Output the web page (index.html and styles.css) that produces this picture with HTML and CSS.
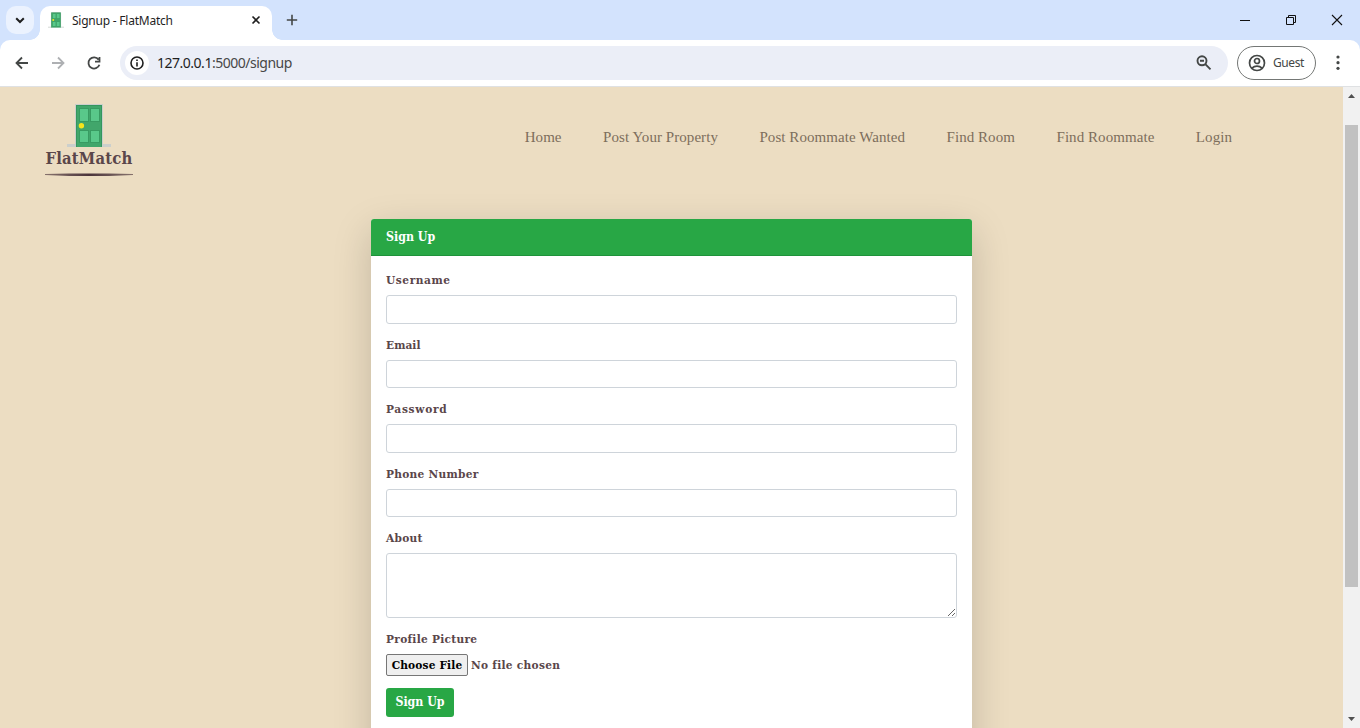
FILE: index.html
```html
<!DOCTYPE html>
<html lang="en">
<head>
<meta charset="utf-8">
<title>Signup - FlatMatch</title>
<link rel="stylesheet" href="styles.css">
</head>
<body>
<svg class="defs" width="0" height="0" aria-hidden="true">
  <symbol id="door" viewBox="0 0 44 43">
    <path d="M8 0h28v40h8v3H0v-3h8z" fill="#cbcfcc"/>
    <path d="M9 1h26v42H9z" fill="#41a66b"/>
    <path d="M9 1h26v1H9zM34 1h1v42h-1zM9 1h1v42H9z" fill="#35965e"/>
    <path d="M12 4h10v14H12zM23 4h10v14H23zM12 26h10v13H12zM23 26h10v13H23z" fill="#389b62"/>
    <path d="M13 5h8v12h-8zM24 5h8v12h-8zM13 27h8v11h-8zM24 27h8v11h-8z" fill="#59c88a"/>
    <circle cx="14.4" cy="21.7" r="2.7" fill="#f6e51d"/>
  </symbol>
</svg>
<div class="window">
  <header class="tabstrip">
    <button class="tab-search"><svg width="28" height="28" viewBox="0 0 28 28"><path d="M10.2 12.2l3.8 3.8 3.8-3.8" fill="none" stroke="#1f1f1f" stroke-width="2"/></svg></button>
    <div class="tab">
      <svg class="favicon" width="16" height="16" viewBox="0 0 44 43"><use href="#door"/></svg>
      <span class="tab-title">Signup - FlatMatch</span>
      <svg class="tab-close" width="10" height="10" viewBox="0 0 10 10"><path d="M1.500 1.500l7 7M8.500 1.500l-7 7" stroke="#1f1f1f" stroke-width="1.6"/></svg>
    </div>
    <svg class="new-tab" width="12" height="12" viewBox="0 0 12 12"><path d="M6 .8v10.4M.8 6h10.4" stroke="#444746" stroke-width="1.6"/></svg>
    <div class="controls">
      <svg width="46" height="40" viewBox="0 0 46 40"><path d="M18 20.5h10" stroke="#111"/></svg>
      <svg width="46" height="40" viewBox="0 0 46 40"><path d="M18.500 17.500h7v7h-7zM20.500 17v-1.500h7v7H26" fill="none" stroke="#111"/></svg>
      <svg width="46" height="40" viewBox="0 0 46 40"><path d="M18 15l10 10M28 15L18 25" stroke="#111" stroke-width="1.1"/></svg>
    </div>
  </header>
  <div class="toolbar">
    <svg class="tool" width="36" height="36" viewBox="0 0 36 36"><path d="M24 18H13M18 12.500L12.500 18l5.500 5.500" fill="none" stroke="#444746" stroke-width="1.8"/></svg>
    <svg class="tool" width="36" height="36" viewBox="0 0 36 36"><path d="M12 18h11M18 12.500l5.500 5.500-5.500 5.500" fill="none" stroke="#aeb0b3" stroke-width="1.8"/></svg>
    <svg class="tool" width="36" height="36" viewBox="0 0 36 36"><path d="M22.600 14.600A5.600 5.600 0 1 0 23.400 19.700M23.500 12v4.600H19" fill="none" stroke="#444746" stroke-width="1.8"/></svg>
    <div class="address">
      <span class="site-info"><svg width="14" height="14" viewBox="0 0 14 14"><circle cx="7" cy="7" r="6" fill="none" stroke="#1f1f1f" stroke-width="1.6"/><path d="M7 6.200v4.200M7 3.500v1.600" stroke="#1f1f1f" stroke-width="1.600"/></svg></span>
      <span class="url">127.0.0.1<span class="url-path">:5000/signup</span></span>
      <svg class="zoom-icon" width="16" height="16" viewBox="0 0 16 16"><circle cx="6" cy="5.800" r="4.500" fill="none" stroke="#444746" stroke-width="1.900"/><path d="M4 5.800h4M9.300 9.100l5.200 5.200" stroke="#444746" stroke-width="1.900"/></svg>
    </div>
    <div class="guest">
      <svg width="18" height="18" viewBox="0 0 18 18" fill="none" stroke="#444746" stroke-width="1.700"><circle cx="9" cy="9" r="7.500"/><circle cx="9" cy="7" r="2.500"/><path d="M3.900 14.100c2.900-2.600 7.300-2.600 10.200 0"/></svg>
      <span>Guest</span>
    </div>
    <svg class="menu" width="4" height="16" viewBox="0 0 4 16" fill="#444746"><circle cx="2" cy="2" r="1.600"/><circle cx="2" cy="7.700" r="1.600"/><circle cx="2" cy="13.300" r="1.600"/></svg>
  </div>
  <div class="viewport">
    <main class="page">
      <nav class="navbar">
        <a class="brand">
          <svg width="44" height="43"><use href="#door"/></svg>
          <span class="brand-name">FlatMatch</span>
          <svg class="brand-line" width="88" height="4" viewBox="0 0 88 4"><defs><linearGradient id="line"><stop offset="0" stop-color="#5b4448" stop-opacity=".7"/><stop offset=".5" stop-color="#4b343b"/><stop offset="1" stop-color="#5b4448" stop-opacity=".7"/></linearGradient></defs><path d="M0 .9L24 .5h40l24 .4v1L64 3.100H24L0 1.900z" fill="url(#line)"/></svg>
        </a>
        <div class="links">
          <a>Home</a><a>Post Your Property</a><a>Post Roommate Wanted</a><a>Find Room</a><a>Find Roommate</a><a>Login</a>
        </div>
      </nav>
      <section class="card">
        <h1 class="card-header">Sign Up</h1>
        <form class="card-body">
          <div class="group"><label class="t-username" for="username">Username</label><input id="username" class="control" type="text"></div>
          <div class="group"><label class="t-email" for="email">Email</label><input id="email" class="control" type="email"></div>
          <div class="group"><label class="t-password" for="password">Password</label><input id="password" class="control" type="password"></div>
          <div class="group"><label for="phone">Phone Number</label><input id="phone" class="control" type="text"></div>
          <div class="group"><label for="about">About</label><textarea id="about" class="control about"></textarea></div>
          <div class="group"><label>Profile Picture</label><div class="file"><button type="button" class="choose">Choose File</button><span>No file chosen</span></div></div>
          <button type="button" class="submit">Sign Up</button>
        </form>
      </section>
    </main>
    <div class="scrollbar">
      <svg width="17" height="17" viewBox="0 0 17 17"><path d="M5 11l3.500-4L12 11z" fill="#505050"/></svg>
      <div class="track"><div class="thumb"></div></div>
      <svg width="17" height="17" viewBox="0 0 17 17"><path d="M5 6l3.500 4L12 6z" fill="#505050"/></svg>
    </div>
  </div>
</div>
</body>
</html>
```
FILE: styles.css
```css
* { box-sizing: border-box; }
html, body { margin: 0; overflow: hidden; }
svg { display: block; flex: none; }
.defs { position: absolute; }
.window { width: 1360px; height: 728px; display: flex; flex-direction: column; background: #d3e3fd; font-family: "Noto Sans", sans-serif; }
.tabstrip { height: 40px; flex: none; display: flex; align-items: center; }
.tab-search { width: 28px; height: 28px; margin-left: 6px; padding: 0; border: 0; border-radius: 10px; background: #ebf2fe; }
.tab { position: relative; width: 232px; height: 34px; margin: 6px 0 0 6px; padding: 0 11px 6px 8px; display: flex; align-items: center; background: #fff; border-radius: 10px 10px 0 0; }
.tab::before, .tab::after { content: ""; position: absolute; bottom: 0; width: 10px; height: 10px; }
.tab::before { left: -10px; background: radial-gradient(circle at 0 0, transparent 9.5px, #fff 10px); }
.tab::after { right: -10px; background: radial-gradient(circle at 100% 0, transparent 9.5px, #fff 10px); }
.tab-title { margin-left: 8px; padding-top: 1px; font-size: 12px; letter-spacing: -.23px; color: #1f1f1f; white-space: nowrap; }
.tab-close { margin-left: auto; }
.new-tab { margin-left: 14px; }
.controls { margin-left: auto; display: flex; }
.toolbar { height: 47px; flex: none; display: flex; align-items: center; padding: 0 20px 1px 4px; background: #fff; border-bottom: 1px solid #dfe1e3; border-radius: 10px 10px 0 0; }
.address { width: 1108px; height: 34px; margin-left: 8px; padding: 0 16px 0 5px; border-radius: 17px; background: #ebeef7; display: flex; align-items: center; }
.site-info { width: 24px; height: 24px; border-radius: 50%; background: #fff; display: grid; place-items: center; }
.url { margin-left: 8px; font-size: 14px; letter-spacing: -.49px; color: #1f1f1f; }
.url-path { color: #474747; }
.zoom-icon { margin-left: auto; }
.guest { width: 79px; height: 34px; margin-left: 9px; padding-left: 10px; border: 1px solid #747775; border-radius: 17px; display: flex; align-items: center; gap: 7px; font-size: 12px; letter-spacing: -.4px; color: #444746; }
.menu { margin-left: auto; }
.viewport { height: 641px; display: flex; overflow: hidden; background: #ecddc2; }
.page { width: 1343px; height: 641px; overflow: hidden; }
.navbar { height: 132px; padding: 17px 111px 0 45px; display: flex; justify-content: space-between; }
.brand { width: 88px; display: flex; flex-direction: column; align-items: center; }
.brand-name { margin-top: 2px; font: bold 16.5px/20px "DejaVu Serif Condensed", "DejaVu Serif", serif; font-stretch: condensed; letter-spacing: .2px; color: #5a464a; white-space: nowrap; }
.brand-line { margin-top: 4px; }
.links { display: flex; gap: 41.5px; padding-top: 23px; font: 15px/20px "Liberation Serif", serif; letter-spacing: .06px; color: #7d6e5c; white-space: nowrap; }
.card { width: 601px; height: 560px; margin-left: 371px; background: #fff; border-radius: 3px; box-shadow: 0 12.8px 38.4px rgba(0,0,0,.175); color: #5a464a; font: bold 11.8px/18px "DejaVu Serif Condensed", "DejaVu Serif", serif; font-stretch: condensed; letter-spacing: .28px; }
.card-header { height: 37px; margin: 0; padding: 0 15px; border-bottom: 1px solid #1e923a; border-radius: 3px 3px 0 0; background: #28a745; color: #fff; font-size: 12.3px; letter-spacing: 0; line-height: 36px; }
.card-body { padding: 15px; }
.group { display: flex; flex-direction: column; margin-bottom: 12px; }
.group label { height: 18px; margin-bottom: 6px; }
.group .t-username { letter-spacing: .55px; }
.group .t-email { letter-spacing: .05px; }
.group .t-password { letter-spacing: .7px; }
.control { width: 571px; height: 28.6px; margin: 0; border: 1px solid #ced4da; border-radius: 3px; background: #fff; }
.about { height: 64.6px; resize: vertical; }
.file { height: 22px; display: flex; align-items: center; gap: 3px; }
.choose { width: 82px; height: 22px; padding: 0; border: 1px solid #767676; border-radius: 2px; background: #efefef; color: #000; font: inherit; letter-spacing: .15px; white-space: nowrap; }
.submit { display: block; width: 68px; height: 29px; padding: 0; border: 0; border-radius: 3px; background: #28a745; color: #fff; font: inherit; font-size: 12.3px; letter-spacing: 0; }
.scrollbar { width: 17px; height: 641px; background: #f1f1f1; display: flex; flex-direction: column; }
.track { flex: 1; padding: 21px 2px 0; }
.thumb { width: 13px; height: 462px; background: #c1c1c1; }
```
